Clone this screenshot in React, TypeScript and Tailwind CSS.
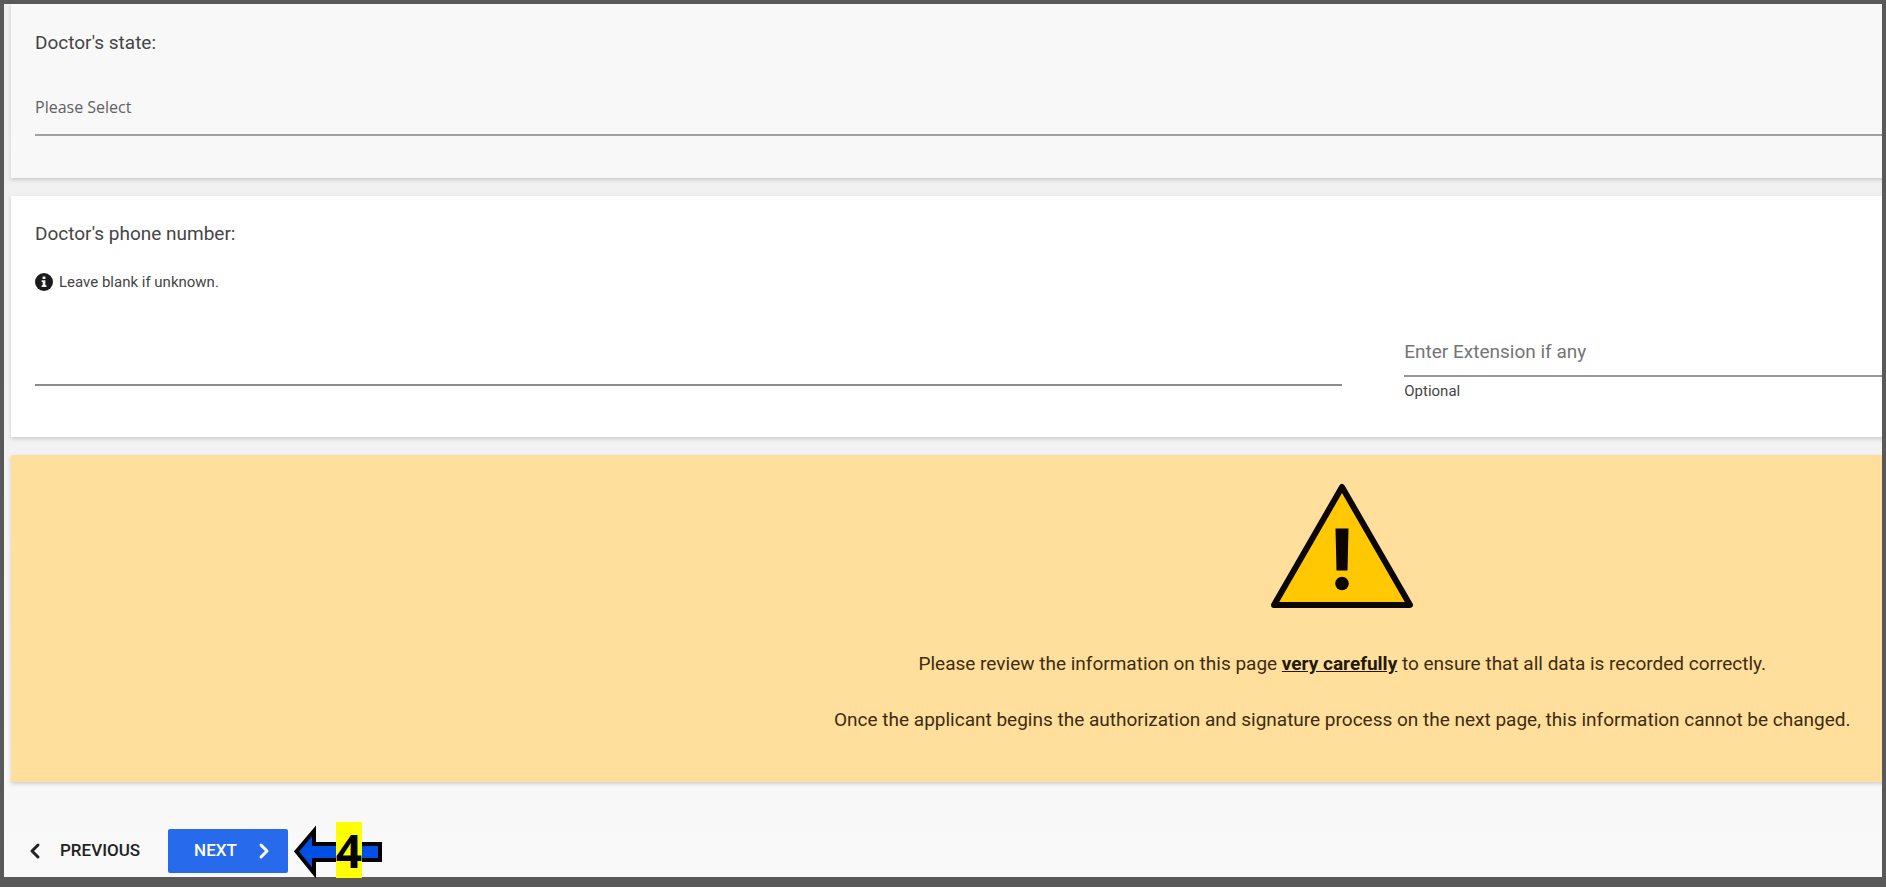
import React from 'react';
import { ChevronLeft, ChevronRight } from 'lucide-react';

const cardShadow = 'shadow-[0_2px_4px_rgba(0,0,0,0.16)]';

const InfoIcon = () => (
    <svg viewBox="0 0 18 18" className="size-[18px] shrink-0" aria-hidden="true">
        <circle cx="9" cy="9" r="9" fill="#1b1b1b" />
        <path d="M7.6 3.6h2.8v2.3H7.6zM6.6 7.3h3.8v5h1.1v1.6H6.6v-1.6h1.1V8.9H6.6z" fill="#f1f1f1" />
    </svg>
);

const WarningIcon = () => (
    <svg viewBox="0 0 144 126" className="h-[126px] w-36" role="img" aria-label="Warning">
        <path d="M72 4L140 122H4z" fill="#ffc800" stroke="#0a0500" strokeWidth="6" strokeLinejoin="round" />
        <path d="M65.500 45.500h13l-1 42h-11z" fill="#0a0500" />
        <circle cx="72" cy="100.500" r="6.800" fill="#0a0500" />
    </svg>
);

const StepMarker = () => (
    <div className="absolute left-[294px] top-[822px] flex h-14 w-[88px] items-center justify-center pl-[22px]">
        <svg viewBox="0 0 88 56" className="absolute inset-0 h-14 w-[88px]" aria-hidden="true">
            <path d="M2.500 29.500L20 9v13h66v16H20v13z" fill="#0050e6" stroke="#000" strokeWidth="4" />
        </svg>
        <span className="relative h-14 bg-[#ffff00] font-['Open_Sans',sans-serif] text-[46px] font-bold leading-14 text-black">4</span>
    </div>
);

export default function App() {
    return (
        <div className="relative overflow-hidden bg-white pb-1 font-[Roboto,sans-serif] text-[#454545]">
            <main className="overflow-hidden border-4 border-b-[10px] border-[#595959] bg-linear-to-b from-[#efefef] via-[#f2f2f2] to-[#f9f9f9]">
                <form className="w-[143%] pl-[7px] pr-4" onSubmit={e => e.preventDefault()}>
                    <section className={`bg-[#f8f8f8] px-6 pb-[42px] pt-[25px] ${cardShadow}`}>
                        <label htmlFor="state" className="block text-[19px] leading-7">Doctor's state:</label>
                        <select id="state" className="mt-8 block h-[47px] w-full appearance-none border-b-2 border-[#a0a0a0] pb-[10px] font-['Open_Sans',sans-serif] text-base text-[#606060]">
                            <option>Please Select</option>
                        </select>
                    </section>

                    <section className={`mt-[18px] bg-white px-6 pb-9 pt-6 ${cardShadow}`}>
                        <label htmlFor="phone" className="block text-[19px] leading-7">Doctor's phone number:</label>
                        <p className="mt-6 flex items-center gap-[6px] text-[15px] leading-5">
                            <InfoIcon />
                            Leave blank if unknown.
                        </p>
                        <div className="mt-9 flex items-start">
                            <input id="phone" type="tel" className="mt-3 h-[46px] w-1/2 border-b-2 border-[#8c8c8c] text-[19px] outline-none" />
                            <div className="flex-1 pl-[62px]">
                                <input
                                    type="text"
                                    aria-label="Extension"
                                    placeholder="Enter Extension if any"
                                    className="block h-[49px] w-full border-b-2 border-[#969696] text-[19px] outline-none placeholder:text-[#757575]"
                                />
                                <p className="pt-1 text-[15px] leading-5">Optional</p>
                            </div>
                        </div>
                    </section>

                    <section className={`mt-[18px] flex flex-col items-center bg-[#ffdf9b] pb-12 pt-7 text-[19px] leading-7 text-[#3d2c10] ${cardShadow}`}>
                        <WarningIcon />
                        <p className="mt-[41px]">
                            Please review the information on this page <strong className="text-[#23190a] underline">very carefully</strong> to ensure that all data is recorded correctly.
                        </p>
                        <p className="mt-7">
                            Once the applicant begins the authorization and signature process on the next page, this information cannot be changed.
                        </p>
                    </section>

                    <div className="flex items-center gap-7 pb-1 pl-3 pt-[47px] text-[17px] font-medium">
                        <button type="button" className="flex h-11 items-center gap-[13px] text-[#222]">
                            <ChevronLeft size={24} strokeWidth={3} />
                            PREVIOUS
                        </button>
                        <button type="submit" className="flex h-11 w-[120px] items-center justify-between rounded-xs bg-[#276bec] pl-[26px] pr-3 text-white">
                            NEXT
                            <ChevronRight size={24} strokeWidth={3} />
                        </button>
                    </div>
                </form>
            </main>
            <StepMarker />
        </div>
    );
}
